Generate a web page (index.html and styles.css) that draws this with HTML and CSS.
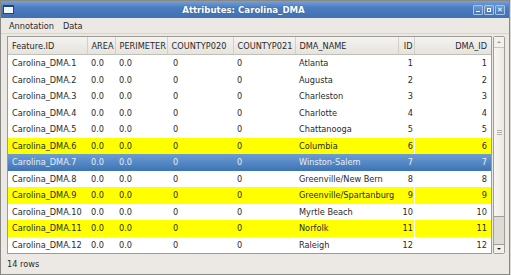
FILE: index.html
```html
<!DOCTYPE html>
<html lang="en">
<head>
    <meta charset="UTF-8">
    <title>Attributes: Carolina_DMA</title>
    <link rel="stylesheet" href="styles.css">
</head>
<body>
    <div class="window">
        <div class="titlebar">
            <span class="win-icon"></span>
            <span class="title">Attributes: Carolina_DMA</span>
            <div class="win-buttons">
                <span class="wbtn min"></span>
                <span class="wbtn max"></span>
                <span class="wbtn close">&#x2715;</span>
            </div>
        </div>
        <div class="menubar">
            <span class="menu-item">Annotation</span>
            <span class="menu-item">Data</span>
        </div>
        <div class="table-area">
            <div class="table-frame">
                <table class="attr-table">
                    <colgroup>
                        <col style="width:79px">
                        <col style="width:28px">
                        <col style="width:52px">
                        <col style="width:66px">
                        <col style="width:62px">
                        <col style="width:103px">
                        <col style="width:16px">
                        <col style="width:77px">
                    </colgroup>
                    <thead>
                        <tr>
                            <th>Feature.ID</th>
                            <th>AREA</th>
                            <th>PERIMETER</th>
                            <th>COUNTYP020</th>
                            <th>COUNTYP021</th>
                            <th>DMA_NAME</th>
                            <th class="num id">ID</th>
                            <th class="num last">DMA_ID</th>
                        </tr>
                    </thead>
                    <tbody>
                        <tr><td>Carolina_DMA.1</td><td>0.0</td><td>0.0</td><td class="zero">0</td><td>0</td><td>Atlanta</td><td class="num id">1</td><td class="num last">1</td></tr>
                        <tr><td>Carolina_DMA.2</td><td>0.0</td><td>0.0</td><td class="zero">0</td><td>0</td><td>Augusta</td><td class="num id">2</td><td class="num last">2</td></tr>
                        <tr><td>Carolina_DMA.3</td><td>0.0</td><td>0.0</td><td class="zero">0</td><td>0</td><td>Charleston</td><td class="num id">3</td><td class="num last">3</td></tr>
                        <tr><td>Carolina_DMA.4</td><td>0.0</td><td>0.0</td><td class="zero">0</td><td>0</td><td>Charlotte</td><td class="num id">4</td><td class="num last">4</td></tr>
                        <tr><td>Carolina_DMA.5</td><td>0.0</td><td>0.0</td><td class="zero">0</td><td>0</td><td>Chattanooga</td><td class="num id">5</td><td class="num last">5</td></tr>
                        <tr class="hl"><td>Carolina_DMA.6</td><td>0.0</td><td>0.0</td><td class="zero">0</td><td>0</td><td>Columbia</td><td class="num id">6</td><td class="num last">6</td></tr>
                        <tr class="sel"><td>Carolina_DMA.7</td><td>0.0</td><td>0.0</td><td class="zero">0</td><td>0</td><td>Winston-Salem</td><td class="num id">7</td><td class="num last">7</td></tr>
                        <tr><td>Carolina_DMA.8</td><td>0.0</td><td>0.0</td><td class="zero">0</td><td>0</td><td>Greenville/New Bern</td><td class="num id">8</td><td class="num last">8</td></tr>
                        <tr class="hl"><td>Carolina_DMA.9</td><td>0.0</td><td>0.0</td><td class="zero">0</td><td>0</td><td>Greenville/Spartanburg</td><td class="num id">9</td><td class="num last">9</td></tr>
                        <tr><td>Carolina_DMA.10</td><td>0.0</td><td>0.0</td><td class="zero">0</td><td>0</td><td>Myrtle Beach</td><td class="num id">10</td><td class="num last">10</td></tr>
                        <tr class="hl"><td>Carolina_DMA.11</td><td>0.0</td><td>0.0</td><td class="zero">0</td><td>0</td><td>Norfolk</td><td class="num id">11</td><td class="num last">11</td></tr>
                        <tr><td>Carolina_DMA.12</td><td>0.0</td><td>0.0</td><td class="zero">0</td><td>0</td><td>Raleigh</td><td class="num id">12</td><td class="num last">12</td></tr>
                    </tbody>
                </table>
            </div>
            <div class="scrollbar">
                <div class="sb-btn up"></div>
                <div class="sb-thumb"><span class="grip"></span></div>
                <div class="sb-trough"></div>
                <div class="sb-btn down"></div>
            </div>
        </div>
        <div class="status">14 rows</div>
    </div>
</body>
</html>
```

FILE: styles.css
```css
body {
    margin: 0;
    background-color: #d9d7d2;
    font-family: "DejaVu Sans", sans-serif;
    font-size: 8.2px;
    color: #2a2a2a;
}
.window {
    width: 508px;
    height: 273px;
    border: 1px solid #8a8883;
    background-color: #ece9e4;
    display: flex;
    flex-direction: column;
}
.titlebar {
    height: 17px;
    background: linear-gradient(#76a1d8, #4a7cbf 40%, #3f70b2);
    display: flex;
    align-items: center;
    position: relative;
}
.win-icon {
    width: 9px;
    height: 6px;
    margin-left: 2px;
    border: 1px solid #26446f;
    border-top-width: 2px;
    background-color: #f4f6f9;
}
.title {
    flex: 1;
    text-align: center;
    color: white;
    font-weight: bold;
    font-size: 8.6px;
    text-shadow: 0 0 1px #2b4f82;
}
.win-buttons {
    display: flex;
    gap: 1px;
    margin-right: 4px;
}
.wbtn {
    width: 8px;
    height: 8px;
    border: 1px solid #a8c3e6;
    border-radius: 1px;
    background: linear-gradient(#6e9bd4, #4677ba);
    position: relative;
    color: white;
    font-size: 7px;
    line-height: 8px;
    text-align: center;
    font-weight: bold;
}
.wbtn.min::after {
    content: "";
    position: absolute;
    left: 2px;
    bottom: 2px;
    width: 4px;
    height: 1px;
    background: white;
}
.wbtn.max::after {
    content: "";
    position: absolute;
    left: 2px;
    top: 2px;
    width: 2px;
    height: 2px;
    border: 1px solid white;
}
.menubar {
    height: 15px;
    display: flex;
    align-items: center;
    gap: 9px;
    padding-left: 8px;
    border-bottom: 1px solid #d8d5cf;
}
.table-area {
    display: flex;
    margin: 2px 3px 0 6px;
}
.table-frame {
    border: 1px solid #9e9b95;
    background: white;
}
.attr-table {
    border-collapse: collapse;
    table-layout: fixed;
    width: 483px;
}
.attr-table th {
    height: 17px;
    padding: 0 4px;
    text-align: left;
    font-weight: normal;
    background: linear-gradient(#f4f3f0, #e6e3de);
    border-bottom: 1px solid #c2bfb8;
    border-right: 1px solid #d3d0ca;
    white-space: nowrap;
    overflow: hidden;
}
.attr-table th.last {
    border-right: none;
}
.attr-table td {
    height: 16.5px;
    padding: 0 4px;
    white-space: nowrap;
    overflow: hidden;
}
.attr-table .zero {
    padding-left: 6px;
}
.attr-table .num {
    text-align: right;
}
.attr-table .id {
    padding: 0 1px;
}
.attr-table tr.hl td {
    background-color: #ffff00;
}
.attr-table tr.hl td.last {
    box-shadow: inset 1px 0 #fff;
}
.attr-table tr.sel td {
    background: linear-gradient(#6c9dd5, #3e73b4);
    color: #e4edf8;
}
.scrollbar {
    width: 10px;
    margin-left: 1px;
    border: 1px solid #a19e98;
    border-radius: 2px;
    display: flex;
    flex-direction: column;
    background-color: #dedbd5;
}
.sb-btn {
    height: 10px;
    background: #f3f1ed;
    position: relative;
}
.sb-btn.up {
    border-bottom: 1px solid #c8c5bf;
}
.sb-btn.down {
    height: 8px;
    border-top: 1px solid #a19e98;
}
.sb-btn.up::after,
.sb-btn.down::after {
    content: "";
    position: absolute;
    left: 3px;
    border-left: 2px solid transparent;
    border-right: 2px solid transparent;
}
.sb-btn.up::after {
    top: 4px;
    border-bottom: 2px solid #9a978f;
}
.sb-btn.down::after {
    top: 3px;
    border-top: 2px solid #222;
}
.sb-thumb {
    height: 168px;
    background: linear-gradient(90deg, #f7f6f3, #ebe8e3);
    border-bottom: 1px solid #a19e98;
    display: flex;
    align-items: center;
    justify-content: center;
}
.grip {
    width: 5px;
    height: 5px;
    background: repeating-linear-gradient(#b5b2ab 0 1px, transparent 1px 2px);
}
.sb-trough {
    flex: 1;
}
.status {
    flex: 1;
    display: flex;
    align-items: center;
    padding-left: 6px;
}
```
